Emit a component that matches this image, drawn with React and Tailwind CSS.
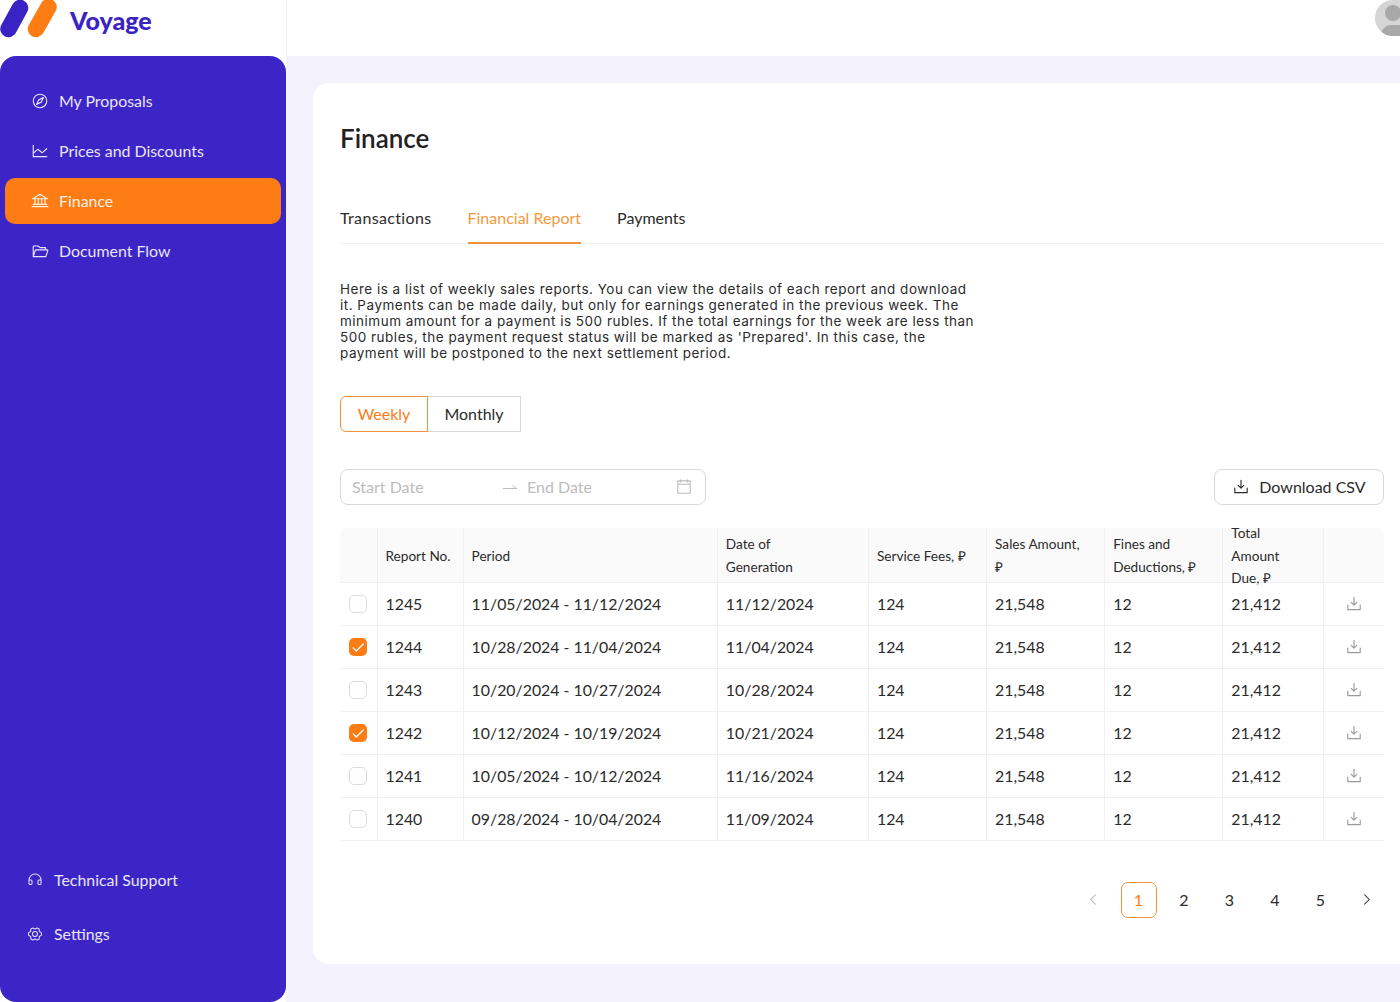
import { PiCompass, PiChartLine, PiBank, PiFolderOpen, PiHeadphones, PiGearSix, PiDownloadSimple, PiCalendarBlank, PiCaretLeft, PiCaretRight, PiCheckBold } from "react-icons/pi";

const navItems = [
  { label: "My Proposals", icon: PiCompass },
  { label: "Prices and Discounts", icon: PiChartLine },
  { label: "Finance", icon: PiBank, active: true },
  { label: "Document Flow", icon: PiFolderOpen },
];

const rows = [
  { no: 1245, period: "11/05/2024 - 11/12/2024", date: "11/12/2024" },
  { no: 1244, period: "10/28/2024 - 11/04/2024", date: "11/04/2024", checked: true },
  { no: 1243, period: "10/20/2024 - 10/27/2024", date: "10/28/2024" },
  { no: 1242, period: "10/12/2024 - 10/19/2024", date: "10/21/2024", checked: true },
  { no: 1241, period: "10/05/2024 - 10/12/2024", date: "11/16/2024" },
  { no: 1240, period: "09/28/2024 - 10/04/2024", date: "11/09/2024" },
];

const columns = [
  { width: "w-[37px]", lines: [] },
  { width: "w-[86px]", lines: ["Report No."] },
  { width: "w-[254px]", lines: ["Period"] },
  { width: "w-[151px]", lines: ["Date of", "Generation"] },
  { width: "w-[118px]", lines: ["Service Fees, ₽"] },
  { width: "w-[118px]", lines: ["Sales Amount,", "₽"] },
  { width: "w-[118px]", lines: ["Fines and", "Deductions, ₽"] },
  { width: "w-[101px]", lines: ["Total", "Amount", "Due, ₽"] },
  { width: "w-[60px]", lines: [] },
];

function Logo() {
  return (
    <div className="flex items-center gap-[12px] -mt-[18px]">
      <svg width="58" height="40" viewBox="0 0 58 40" className="shrink-0">
        <line x1="8.5" y1="30" x2="20" y2="9" stroke="#3a23c5" strokeWidth="16.5" strokeLinecap="round" />
        <line x1="36" y1="30" x2="48.5" y2="8" stroke="#fd7c14" strokeWidth="16.5" strokeLinecap="round" />
      </svg>
      <span className="mt-[2px] text-[25px] font-black leading-none text-[#3a23c5]">Voyage</span>
    </div>
  );
}

function Sidebar() {
  return (
    <aside className="flex w-[286px] flex-1 flex-col justify-between rounded-[16px] bg-[#3c25c6] px-[5px] pb-[57px] pt-[22px] text-[15.9px] text-[#e9e6fb]">
      <nav className="flex flex-col gap-[4px]">
        {navItems.map((item) => (
          <a key={item.label} className={`flex h-[46px] items-center gap-[10px] rounded-[10px] pl-[26px] ${item.active ? "bg-[#fd7c14] text-[#fff1e3]" : ""}`}>
            <item.icon size={18} />
            {item.label}
          </a>
        ))}
      </nav>
      <div className="flex flex-col gap-[31px] pl-[22px]">
        <a className="flex h-[23px] items-center gap-[11px]"><PiHeadphones size={16} />Technical Support</a>
        <a className="flex h-[23px] items-center gap-[11px]"><PiGearSix size={16} />Settings</a>
      </div>
    </aside>
  );
}

function Checkbox({ checked }) {
  if (checked) {
    return (
      <span className="flex h-[18px] w-[18px] items-center justify-center rounded-[5px] bg-[#fd7c14] text-white">
        <PiCheckBold size={14} />
      </span>
    );
  }
  return <span className="block h-[18px] w-[18px] rounded-[5px] border border-[#dcdcdc] bg-white" />;
}

function ReportTable() {
  return (
    <table className="w-full table-fixed border-collapse text-[#2b2b2b]">
      <colgroup>
        {columns.map((col, i) => <col key={i} className={col.width} />)}
      </colgroup>
      <thead>
        <tr>
          {columns.map((col, i) => (
            <th key={i} className="h-[54px] border-b border-r border-[#f0f0f0] bg-[#fafafa] p-0 text-left text-[13.6px] font-normal leading-[22.5px] first:rounded-tl-[8px] last:rounded-tr-[8px] last:border-r-0">
              <div className="flex h-[53px] items-center px-[8px] pt-[2px]">
                <div className="whitespace-nowrap">
                  {col.lines.map((line) => <div key={line}>{line}</div>)}
                </div>
              </div>
            </th>
          ))}
        </tr>
      </thead>
      <tbody>
        {rows.map((row) => (
          <tr key={row.no} className="h-[43px] border-b border-[#f0f0f0] text-[15.85px]">
            <td className="border-r border-[#f0f0f0] pl-[9px]"><Checkbox checked={row.checked} /></td>
            <td className="border-r border-[#f0f0f0] pl-[8px]">{row.no}</td>
            <td className="border-r border-[#f0f0f0] pl-[8px]">{row.period}</td>
            <td className="border-r border-[#f0f0f0] pl-[8px]">{row.date}</td>
            <td className="border-r border-[#f0f0f0] pl-[8px]">124</td>
            <td className="border-r border-[#f0f0f0] pl-[8px]">21,548</td>
            <td className="border-r border-[#f0f0f0] pl-[8px]">12</td>
            <td className="border-r border-[#f0f0f0] pl-[8px]">21,412</td>
            <td className="pl-[20.5px] text-[#9a9a9a]"><PiDownloadSimple size={18} /></td>
          </tr>
        ))}
      </tbody>
    </table>
  );
}

function Pagination() {
  return (
    <div className="mt-[41px] flex items-center justify-end gap-[9.5px] text-[16px] text-[#2b2b2b]">
      <span className="flex h-[36px] w-[36px] items-center justify-center text-[#b5b5b5]"><PiCaretLeft size={15} /></span>
      <span className="flex h-[36px] w-[36px] items-center justify-center rounded-[7px] border border-[#f0923f] text-[#fd7c14]">1</span>
      {[2, 3, 4, 5].map((n) => (
        <span key={n} className="flex h-[36px] w-[36px] items-center justify-center">{n}</span>
      ))}
      <span className="flex h-[36px] w-[36px] items-center justify-center"><PiCaretRight size={15} /></span>
    </div>
  );
}

export default function App() {
  return (
    <div className="flex h-[1002px] w-[1400px] overflow-hidden bg-white font-['Lato',sans-serif]">
      <div className="flex w-[286px] shrink-0 flex-col">
        <div className="flex h-[56px] items-center overflow-hidden bg-white"><Logo /></div>
        <Sidebar />
      </div>
      <div className="flex min-w-0 flex-1 flex-col border-l border-[#f3f3f7]">
        <header className="flex h-[56px] shrink-0 items-start justify-end overflow-hidden bg-white">
          <div className="relative -mr-[15px] h-[36px] w-[40px] shrink-0 overflow-hidden rounded-full bg-[#d5d5d5]">
            <span className="absolute left-[10px] top-[5px] h-[16px] w-[16px] rounded-full bg-[#a8a8a8]" />
            <span className="absolute left-[6px] top-[25px] h-[20px] w-[28px] rounded-full bg-[#a8a8a8]" />
          </div>
        </header>
        <main className="flex-1 bg-[#f4f3fd] pb-[38px] pl-[26px] pt-[27px]">
          <section className="h-full rounded-l-[16px] bg-white pl-[27px] pr-[16px] pt-[37px]">
            <h1 className="text-[26px] font-semibold leading-[36px] text-[#222]">Finance</h1>
            <div className="mt-[43px] flex h-[45px] gap-[36px] border-b border-[#f0f0f0] text-[16px] text-[#2b2b2b]">
              <span className="pt-[7px] tracking-[0.35px]">Transactions</span>
              <span className="h-[45px] border-b-2 border-[#f0923f] pt-[7px] text-[#f59a3e]">Financial Report</span>
              <span className="pt-[7px]">Payments</span>
            </div>
            <p className="mt-[37px] w-[636px] font-['Inter',sans-serif] text-[13.5px] leading-[16px] tracking-[0.5px] text-[#2b2b2b]">
              Here is a list of weekly sales reports. You can view the details of each report and download it. Payments can be made daily, but only for earnings generated in the previous week. The minimum amount for a payment is 500 rubles. If the total earnings for the week are less than 500 rubles, the payment request status will be marked as 'Prepared'. In this case, the payment will be postponed to the next settlement period.
            </p>
            <div className="mt-[35px] flex h-[36px] text-[16px]">
              <span className="z-10 flex w-[88px] items-center justify-center rounded-l-[6px] border border-[#f0923f] text-[#fd7c14]">Weekly</span>
              <span className="-ml-px flex w-[94px] items-center justify-center border border-[#d9d9d9] text-[#2b2b2b]">Monthly</span>
            </div>
            <div className="mt-[37px] flex items-center justify-between">
              <div className="flex h-[36px] w-[366px] items-center rounded-[8px] border border-[#d9d9d9] pl-[11px] pr-[12px] text-[16px] text-[#bdbdbd]">
                <span className="w-[151px]">Start Date</span>
                <svg width="14" height="8" viewBox="0 0 14 8" fill="none" stroke="currentColor" className="mr-[10px] shrink-0">
                  <path d="M0 5.5h14M9.5 2.5l4 3" />
                </svg>
                <span className="flex-1">End Date</span>
                <PiCalendarBlank size={18} />
              </div>
              <button className="flex h-[36px] w-[170px] items-center justify-center gap-[9px] rounded-[8px] border border-[#d9d9d9] text-[16px] text-[#2b2b2b]">
                <PiDownloadSimple size={18} />
                Download CSV
              </button>
            </div>
            <div className="mt-[23px]">
              <ReportTable />
            </div>
            <Pagination />
          </section>
        </main>
      </div>
    </div>
  );
}
